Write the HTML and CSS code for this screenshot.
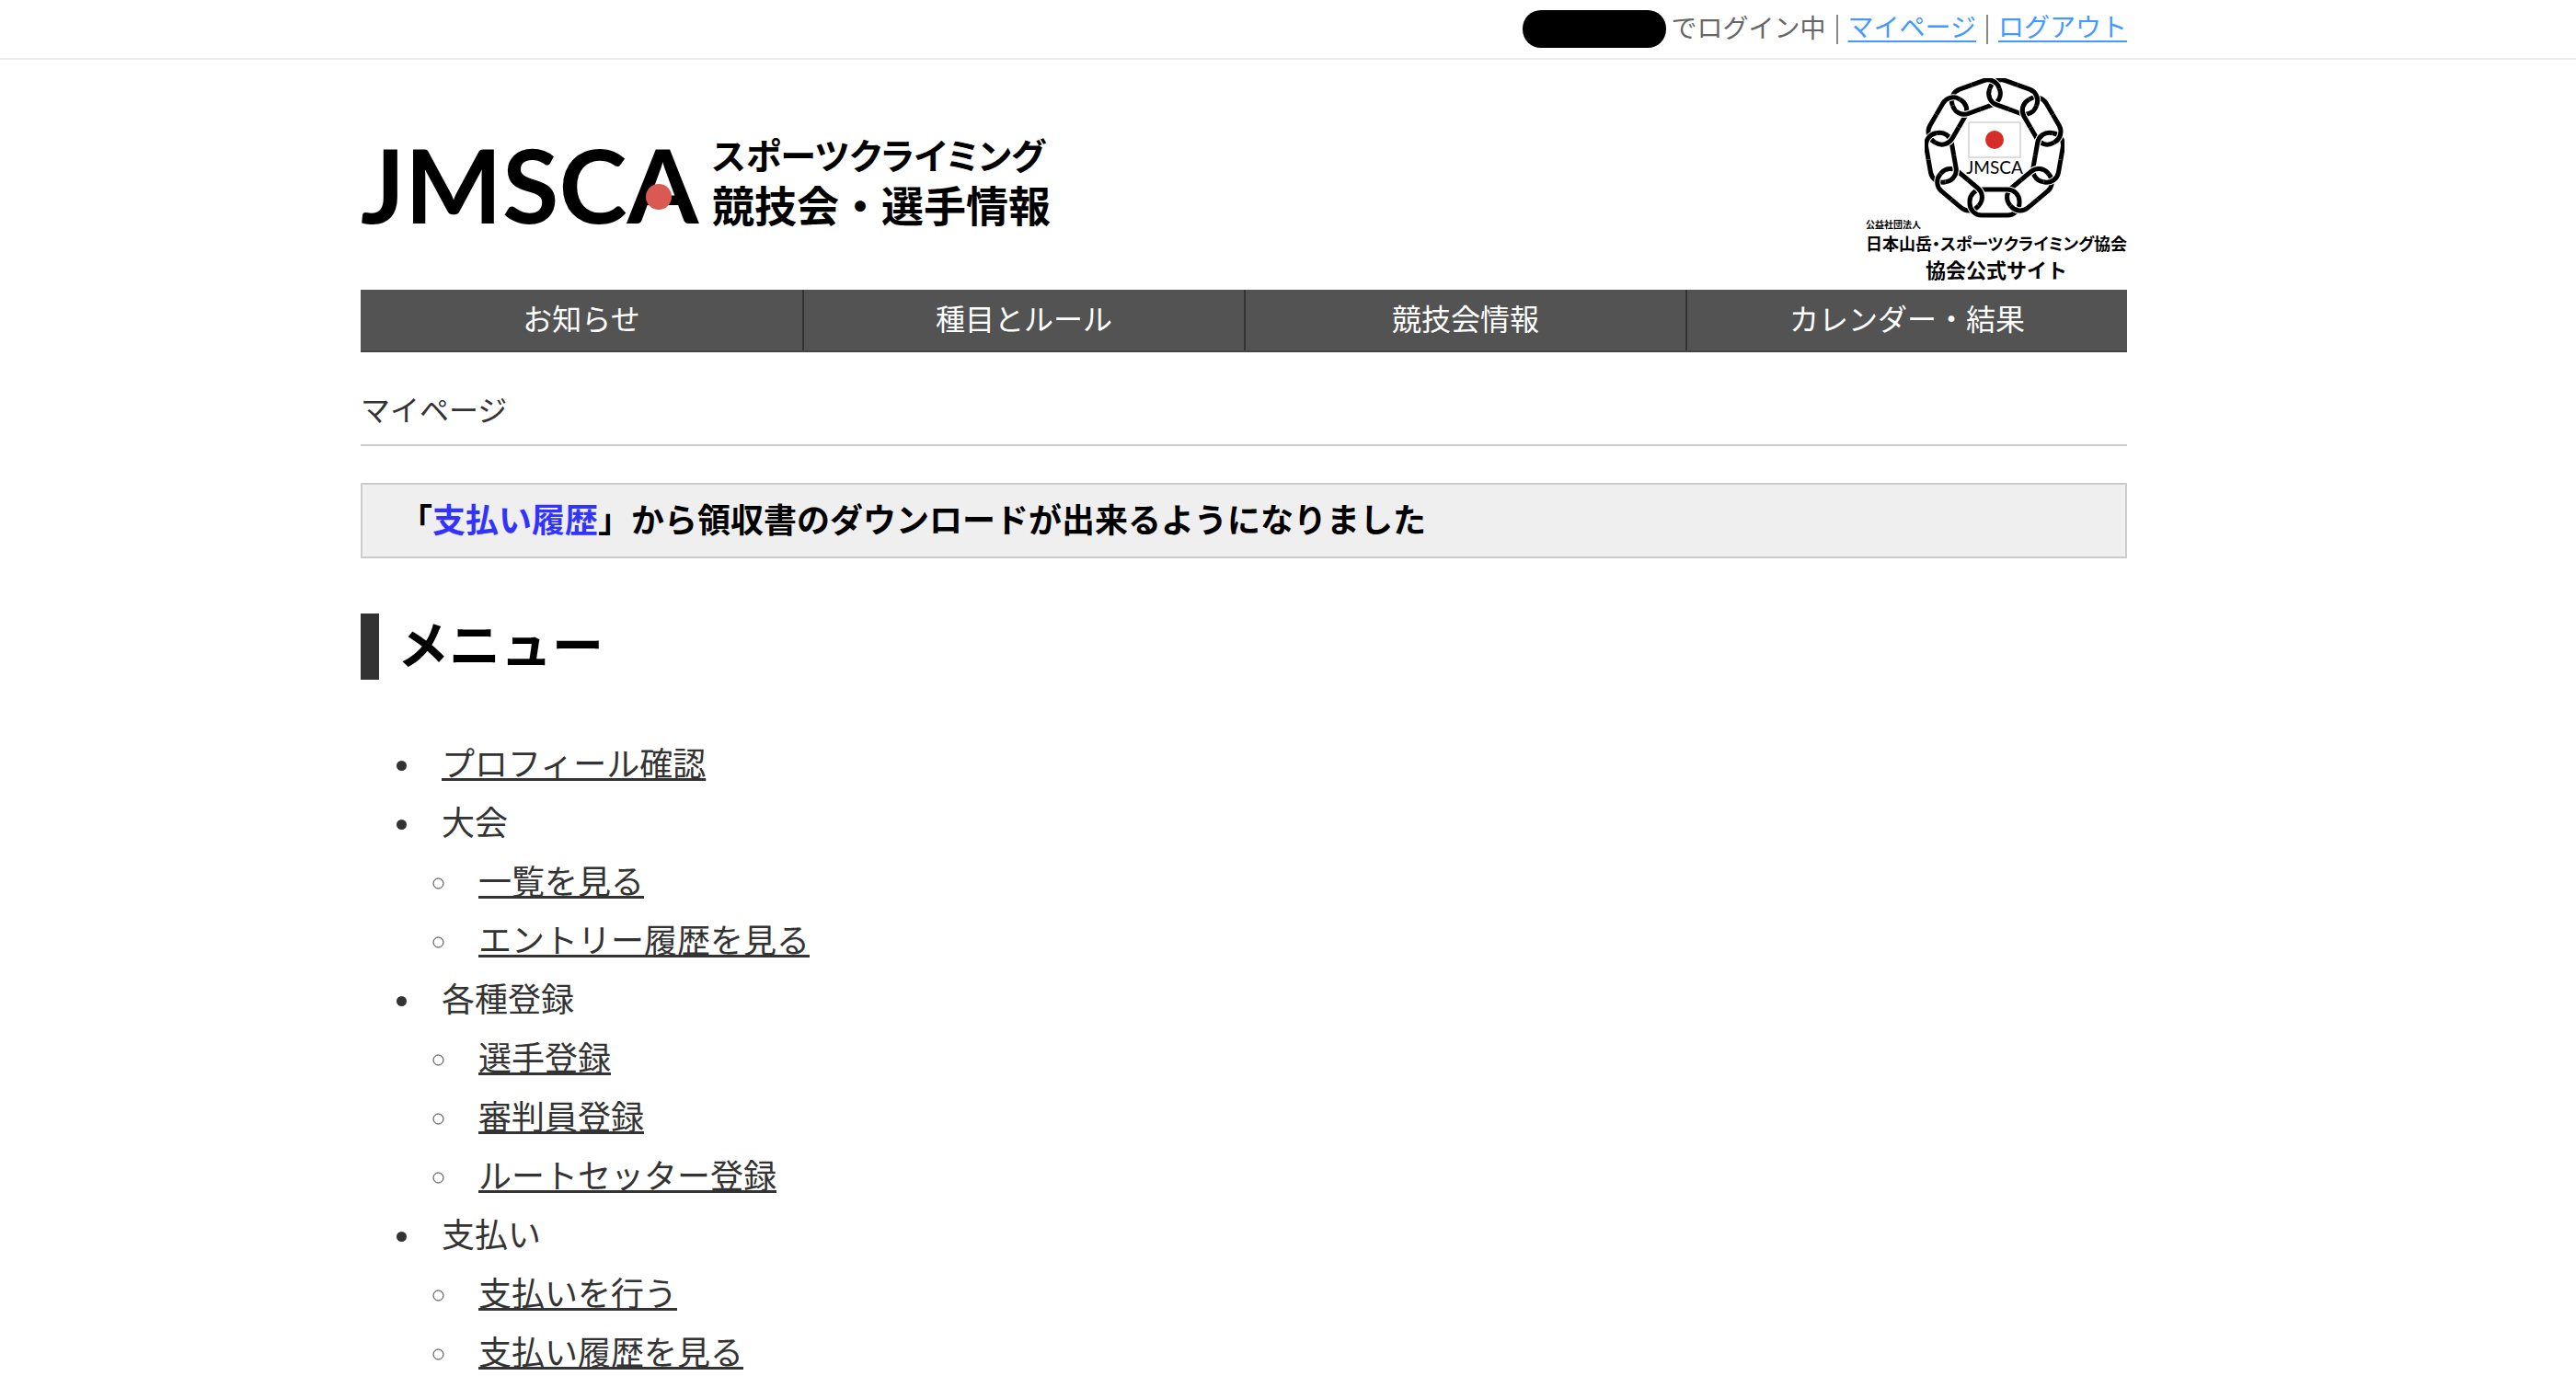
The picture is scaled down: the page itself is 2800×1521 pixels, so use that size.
FILE: index.html
```html
<!DOCTYPE html>
<html lang="ja">
<head>
    <meta charset="utf-8">
    <title>マイページ</title>
    <link rel="stylesheet" href="styles.css">
</head>
<body>
    <div class="userbar">
        <div class="inner userbox">
            <span class="username"></span>
            <span class="status">でログイン中</span>
            <a href="#" class="userlink">マイページ</a>
            <a href="#" class="userlink">ログアウト</a>
        </div>
    </div>

    <div class="inner">
        <header class="header">
            <a href="#" class="logo">
                <svg class="logomark" viewBox="0 0 370 110" role="img" aria-label="JMSCA">
                    <text x="0" y="100" class="marktext" font-size="112">JMSCA</text>
                    <circle cx="324" cy="71" r="14" fill="#d85a52"/>
                </svg>
                <span class="logotext">
                    <span class="kana">スポーツクライミング</span>
                    <span>競技会・選手情報</span>
                </span>
            </a>
            <a href="#" class="assoc">
                <svg class="ring" viewBox="-76 -76 152 152">
                    <defs>
                        <rect id="link" x="-27" y="45" width="54" height="28" rx="13"/>
                        <path id="over" d="M0 73H-14A13 13 0 0 1 -27 60V59M0 45H14A13 13 0 0 1 27 58V59"/>
                        <g id="base">
                            <use href="#link" class="halo"/>
                            <use href="#link" class="line"/>
                        </g>
                        <g id="top">
                            <use href="#over" class="halo"/>
                            <use href="#over" class="line"/>
                        </g>
                    </defs>
                    <use href="#base"/>
                    <use href="#base" transform="rotate(40)"/>
                    <use href="#base" transform="rotate(80)"/>
                    <use href="#base" transform="rotate(120)"/>
                    <use href="#base" transform="rotate(160)"/>
                    <use href="#base" transform="rotate(200)"/>
                    <use href="#base" transform="rotate(240)"/>
                    <use href="#base" transform="rotate(280)"/>
                    <use href="#base" transform="rotate(320)"/>
                    <!-- parts that pass over the next link -->
                    <use href="#top"/>
                    <use href="#top" transform="rotate(40)"/>
                    <use href="#top" transform="rotate(80)"/>
                    <use href="#top" transform="rotate(120)"/>
                    <use href="#top" transform="rotate(160)"/>
                    <use href="#top" transform="rotate(200)"/>
                    <use href="#top" transform="rotate(240)"/>
                    <use href="#top" transform="rotate(280)"/>
                    <use href="#top" transform="rotate(320)"/>
                    <rect x="-28" y="-28" width="56" height="38" fill="#fff" stroke="#bbb"/>
                    <circle cx="0" cy="-9" r="10" fill="#d42c27"/>
                    <text x="0" y="28" class="marktext small" font-size="19" text-anchor="middle">JMSCA</text>
                </svg>
                <span class="corp">公益社団法人</span>
                <span class="assocname">日本山岳・スポーツクライミング協会</span>
                <span class="site">協会公式サイト</span>
            </a>
        </header>

        <nav class="nav">
            <a href="#">お知らせ</a>
            <a href="#">種目とルール</a>
            <a href="#">競技会情報</a>
            <a href="#">カレンダー・結果</a>
        </nav>

        <div class="crumb">マイページ</div>

        <p class="notice">「<a href="#">支払い履歴</a>」から領収書のダウンロードが出来るようになりました</p>

        <h1 class="title">メニュー</h1>

        <ul class="menu">
            <li><a href="#">プロフィール確認</a></li>
            <li>大会
                <ul class="submenu">
                    <li><a href="#">一覧を見る</a></li>
                    <li><a href="#">エントリー履歴を見る</a></li>
                </ul>
            </li>
            <li>各種登録
                <ul class="submenu">
                    <li><a href="#">選手登録</a></li>
                    <li><a href="#">審判員登録</a></li>
                    <li><a href="#">ルートセッター登録</a></li>
                </ul>
            </li>
            <li>支払い
                <ul class="submenu">
                    <li><a href="#">支払いを行う</a></li>
                    <li><a href="#">支払い履歴を見る</a></li>
                </ul>
            </li>
        </ul>
    </div>
</body>
</html>
```

FILE: styles.css
```css
body {
    margin: 0;
    background-color: #fff;
    color: #333;
    font-family: "Liberation Sans", "Noto Sans CJK JP", sans-serif;
    font-size: 36px;
    line-height: 64px;
}
.inner {
    max-width: 1920px;
    margin-left: 14%;
}
.userbar {
    border-bottom: 2px solid #eee;
}
.userbox {
    display: flex;
    align-items: center;
    justify-content: flex-end;
    height: 63px;
    font-size: 28px;
    line-height: 32px;
    color: #666;
}
.username {
    width: 156px;
    height: 41px;
    border-radius: 20px;
    background-color: #000;
}
.status {
    margin-left: 6px;
}
.userlink {
    color: #4499ff;
    text-underline-offset: 4px;
    text-decoration-thickness: 2px;
}
.userlink::before {
    content: "";
    display: inline-block;
    height: 32px;
    margin: 0 11px;
    border-left: 2px solid #888;
    vertical-align: middle;
}
.header {
    display: flex;
    justify-content: space-between;
    align-items: center;
    box-sizing: border-box;
    height: 250px;
    padding-top: 16px;
}
.logo {
    display: flex;
    align-items: center;
    gap: 12px;
    color: #000;
    text-decoration: none;
}
.logomark {
    width: 370px;
    height: 110px;
    overflow: visible;
}
.marktext {
    font-family: Lato, sans-serif;
    font-weight: bold;
    fill: #000;
}
.small {
    font-weight: normal;
}
.logotext {
    display: flex;
    flex-direction: column;
    font-size: 46px;
    font-weight: bold;
    line-height: 54px;
}
.kana {
    font-size: 39px;
    font-feature-settings: "palt";
}
.assoc {
    display: flex;
    flex-direction: column;
    color: #000;
    text-decoration: none;
    font-weight: bold;
}
.ring {
    align-self: center;
    width: 152px;
    height: 152px;
    margin-right: 4px;
}
.halo {
    fill: none;
    stroke: #fff;
    stroke-width: 7px;
}
.line {
    fill: none;
    stroke: #000;
    stroke-width: 5px;
}
.corp {
    font-size: 10px;
    line-height: 16px;
}
.assocname {
    font-size: 18px;
    line-height: 26px;
    font-feature-settings: "palt";
    white-space: nowrap;
}
.site {
    font-size: 22px;
    line-height: 32px;
    text-align: center;
}
.nav {
    display: grid;
    grid-template-columns: repeat(4, 1fr);
    border-bottom: 2px solid #444;
    background-color: #535353;
}
.nav a {
    color: #fff;
    font-size: 32px;
    line-height: 66px;
    text-align: center;
    text-decoration: none;
}
.nav a + a {
    border-left: 2px solid #333;
}
.crumb {
    margin-top: 32px;
    padding-bottom: 4px;
    border-bottom: 2px solid #ccc;
    font-size: 32px;
}
.notice {
    margin: 40px 0 60px;
    padding: 8px 40px 6px;
    border: 2px solid #ccc;
    background-color: #efefef;
    color: #000;
    font-weight: bold;
}
.notice a {
    color: #3333ff;
    text-decoration: none;
}
.title {
    margin: 0 0 61px;
    padding-left: 20px;
    border-left: 20px solid #333;
    color: #000;
    font-size: 56px;
    line-height: 72px;
}
.menu {
    margin: 0;
    padding-left: 68px;
}
.menu li {
    padding-left: 20px;
}
.submenu {
    padding-left: 20px;
    list-style-type: circle;
}
.menu a {
    color: #333;
    text-underline-offset: 2px;
    text-decoration-thickness: 3px;
    text-decoration-skip-ink: none;
}
```
